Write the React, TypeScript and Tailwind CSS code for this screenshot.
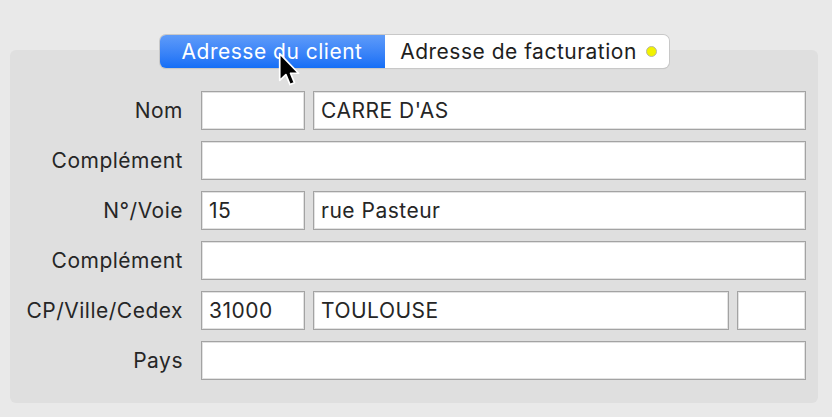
import React from "react";

const font = { fontFamily: "Inter, 'Noto Sans', sans-serif", letterSpacing: "0.5px" };

function Box({ w, text }: { w?: string; text?: string }) {
  return (
    <div
      className={`h-[39px] border border-[#a3a3a3] bg-white flex items-center pl-[7px] text-[21px] text-[#262626] ${w ?? "flex-1"}`}
      style={{ boxShadow: "inset 0 0 0 1px #e2e2e2" }}
    >
      {text}
    </div>
  );
}

function Row({ label, children }: { label: string; children: React.ReactNode }) {
  return (
    <div className="flex items-center h-[39px]">
      <div className="w-[173px] text-right text-[21px] text-[#262626]">{label}</div>
      <div className="flex-1 flex gap-[8px] ml-[18px]">{children}</div>
    </div>
  );
}

export default function App() {
  return (
    <div className="w-[832px] h-[417px] bg-[#e9e9e9] pt-[35px] pl-[10px] pr-[14px] relative overflow-hidden" style={font}>
      <div className="flex justify-center relative z-10">
        <div className="flex h-[33px] rounded-[6px] shadow-[0_0_0_1px_#c8c8c8,0_1px_1px_rgba(0,0,0,0.15)] overflow-hidden text-[21px]">
          <div className="w-[225px] flex items-center justify-center text-white bg-gradient-to-b from-[#5e9bf9] to-[#136ef6]">
            Adresse du client
          </div>
          <div className="w-[284px] bg-white flex items-center justify-center gap-[9px] pl-[4px] text-[#1e1e1e]">
            <span>Adresse de facturation</span>
            <span className="w-[11px] h-[11px] rounded-full bg-[#f2f200] border border-[#b8b8a0]" />
          </div>
        </div>
      </div>
      <div className="-mt-[18px] h-[353px] rounded-[6px] bg-[#dfdfdf] pt-[41px] pr-[12px] flex flex-col gap-[11px]">
        <Row label="Nom">
          <Box w="w-[104px]" />
          <Box text="CARRE D'AS" />
        </Row>
        <Row label="Complément">
          <Box />
        </Row>
        <Row label="N°/Voie">
          <Box w="w-[104px]" text="15" />
          <Box text="rue Pasteur" />
        </Row>
        <Row label="Complément">
          <Box />
        </Row>
        <Row label="CP/Ville/Cedex">
          <Box w="w-[104px]" text="31000" />
          <Box text="TOULOUSE" />
          <Box w="w-[69px]" />
        </Row>
        <Row label="Pays">
          <Box />
        </Row>
      </div>
      <svg className="absolute left-[278px] top-[52px] z-20" width="24" height="36" viewBox="0 0 14 21">
        <path d="M1 1 L1 16.5 L4.6 13.2 L7 19 L9.6 17.9 L7.3 12.4 L12 12.4 Z" fill="black" stroke="white" strokeWidth="1" strokeLinejoin="round" />
      </svg>
    </div>
  );
}
